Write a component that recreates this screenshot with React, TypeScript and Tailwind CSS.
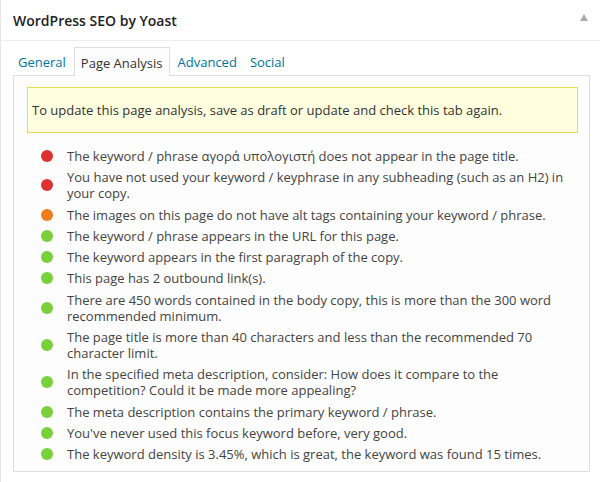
import React from "react";

type Status = "bad" | "ok" | "good";

const results: { status: Status; text: string }[] = [
  { status: "bad", text: "The keyword / phrase αγορά υπολογιστή does not appear in the page title." },
  { status: "bad", text: "You have not used your keyword / keyphrase in any subheading (such as an H2) in your copy." },
  { status: "ok", text: "The images on this page do not have alt tags containing your keyword / phrase." },
  { status: "good", text: "The keyword / phrase appears in the URL for this page." },
  { status: "good", text: "The keyword appears in the first paragraph of the copy." },
  { status: "good", text: "This page has 2 outbound link(s)." },
  { status: "good", text: "There are 450 words contained in the body copy, this is more than the 300 word recommended minimum." },
  { status: "good", text: "The page title is more than 40 characters and less than the recommended 70 character limit." },
  { status: "good", text: "In the specified meta description, consider: How does it compare to the competition? Could it be made more appealing?" },
  { status: "good", text: "The meta description contains the primary keyword / phrase." },
  { status: "good", text: "You've never used this focus keyword before, very good." },
  { status: "good", text: "The keyword density is 3.45%, which is great, the keyword was found 15 times." },
];

const dotColor: Record<Status, string> = {
  bad: "bg-[#dc3232]",
  ok: "bg-[#ee7c1b]",
  good: "bg-[#7ad03a]",
};

const tabs = ["General", "Page Analysis", "Advanced", "Social"];

export default function App() {
  return (
    <div className="w-[600px] h-[482px] bg-white border-l border-[#e5e5e5] font-['Open_Sans',sans-serif] text-[#444] overflow-hidden">
      {/* Header */}
      <div className="h-[41px] border-b border-[#eeeeee] flex items-center justify-between pl-[12px] pr-[12px]">
        <h3 className="text-[14px] font-semibold text-[#222] leading-none pt-[2px]">WordPress SEO by Yoast</h3>
        <span className="w-0 h-0 border-l-[4px] border-r-[4px] border-b-[7px] border-l-transparent border-r-transparent border-b-[#aaaaaa] mb-[6px]" />
      </div>

      <div className="pl-[12px] pr-[10px] pt-[6px]">
        {/* Tabs */}
        <div className="flex items-end h-[28px] gap-[3px]">
          {tabs.map((tab) =>
            tab === "Page Analysis" ? (
              <div
                key={tab}
                className="h-[29px] -mb-px px-[6px] pt-[3px] flex items-center border border-b-0 border-[#dfdfdf] bg-[#fdfdfd] text-[13px] text-[#333] relative z-10"
              >
                {tab}
              </div>
            ) : (
              <a
                key={tab}
                href="#"
                className="h-[28px] px-[5px] pt-[3px] flex items-center text-[13px] text-[#0074a2]"
              >
                {tab}
              </a>
            )
          )}
        </div>

        {/* Panel */}
        <div className="border border-[#dfdfdf] bg-[#fdfdfd] pt-[11px] pl-[13px] pr-[11px] pb-[9px]">
          <div className="border border-[#e6db55] bg-[#ffffe0] py-[13px] pl-[4px] text-[13px] leading-[18px] text-[#333]">
            To update this page analysis, save as draft or update and check this tab again.
          </div>

          <ul className="mt-[15px] flex flex-col gap-[5.3px]">
            {results.map((r, i) => (
              <li key={i} className="flex items-center pl-[14px]">
                <span className={`shrink-0 w-[12px] h-[12px] rounded-full ${dotColor[r.status]}`} />
                <span className="ml-[14px] text-[13px] leading-[16px]">{r.text}</span>
              </li>
            ))}
          </ul>
        </div>
      </div>
    </div>
  );
}
